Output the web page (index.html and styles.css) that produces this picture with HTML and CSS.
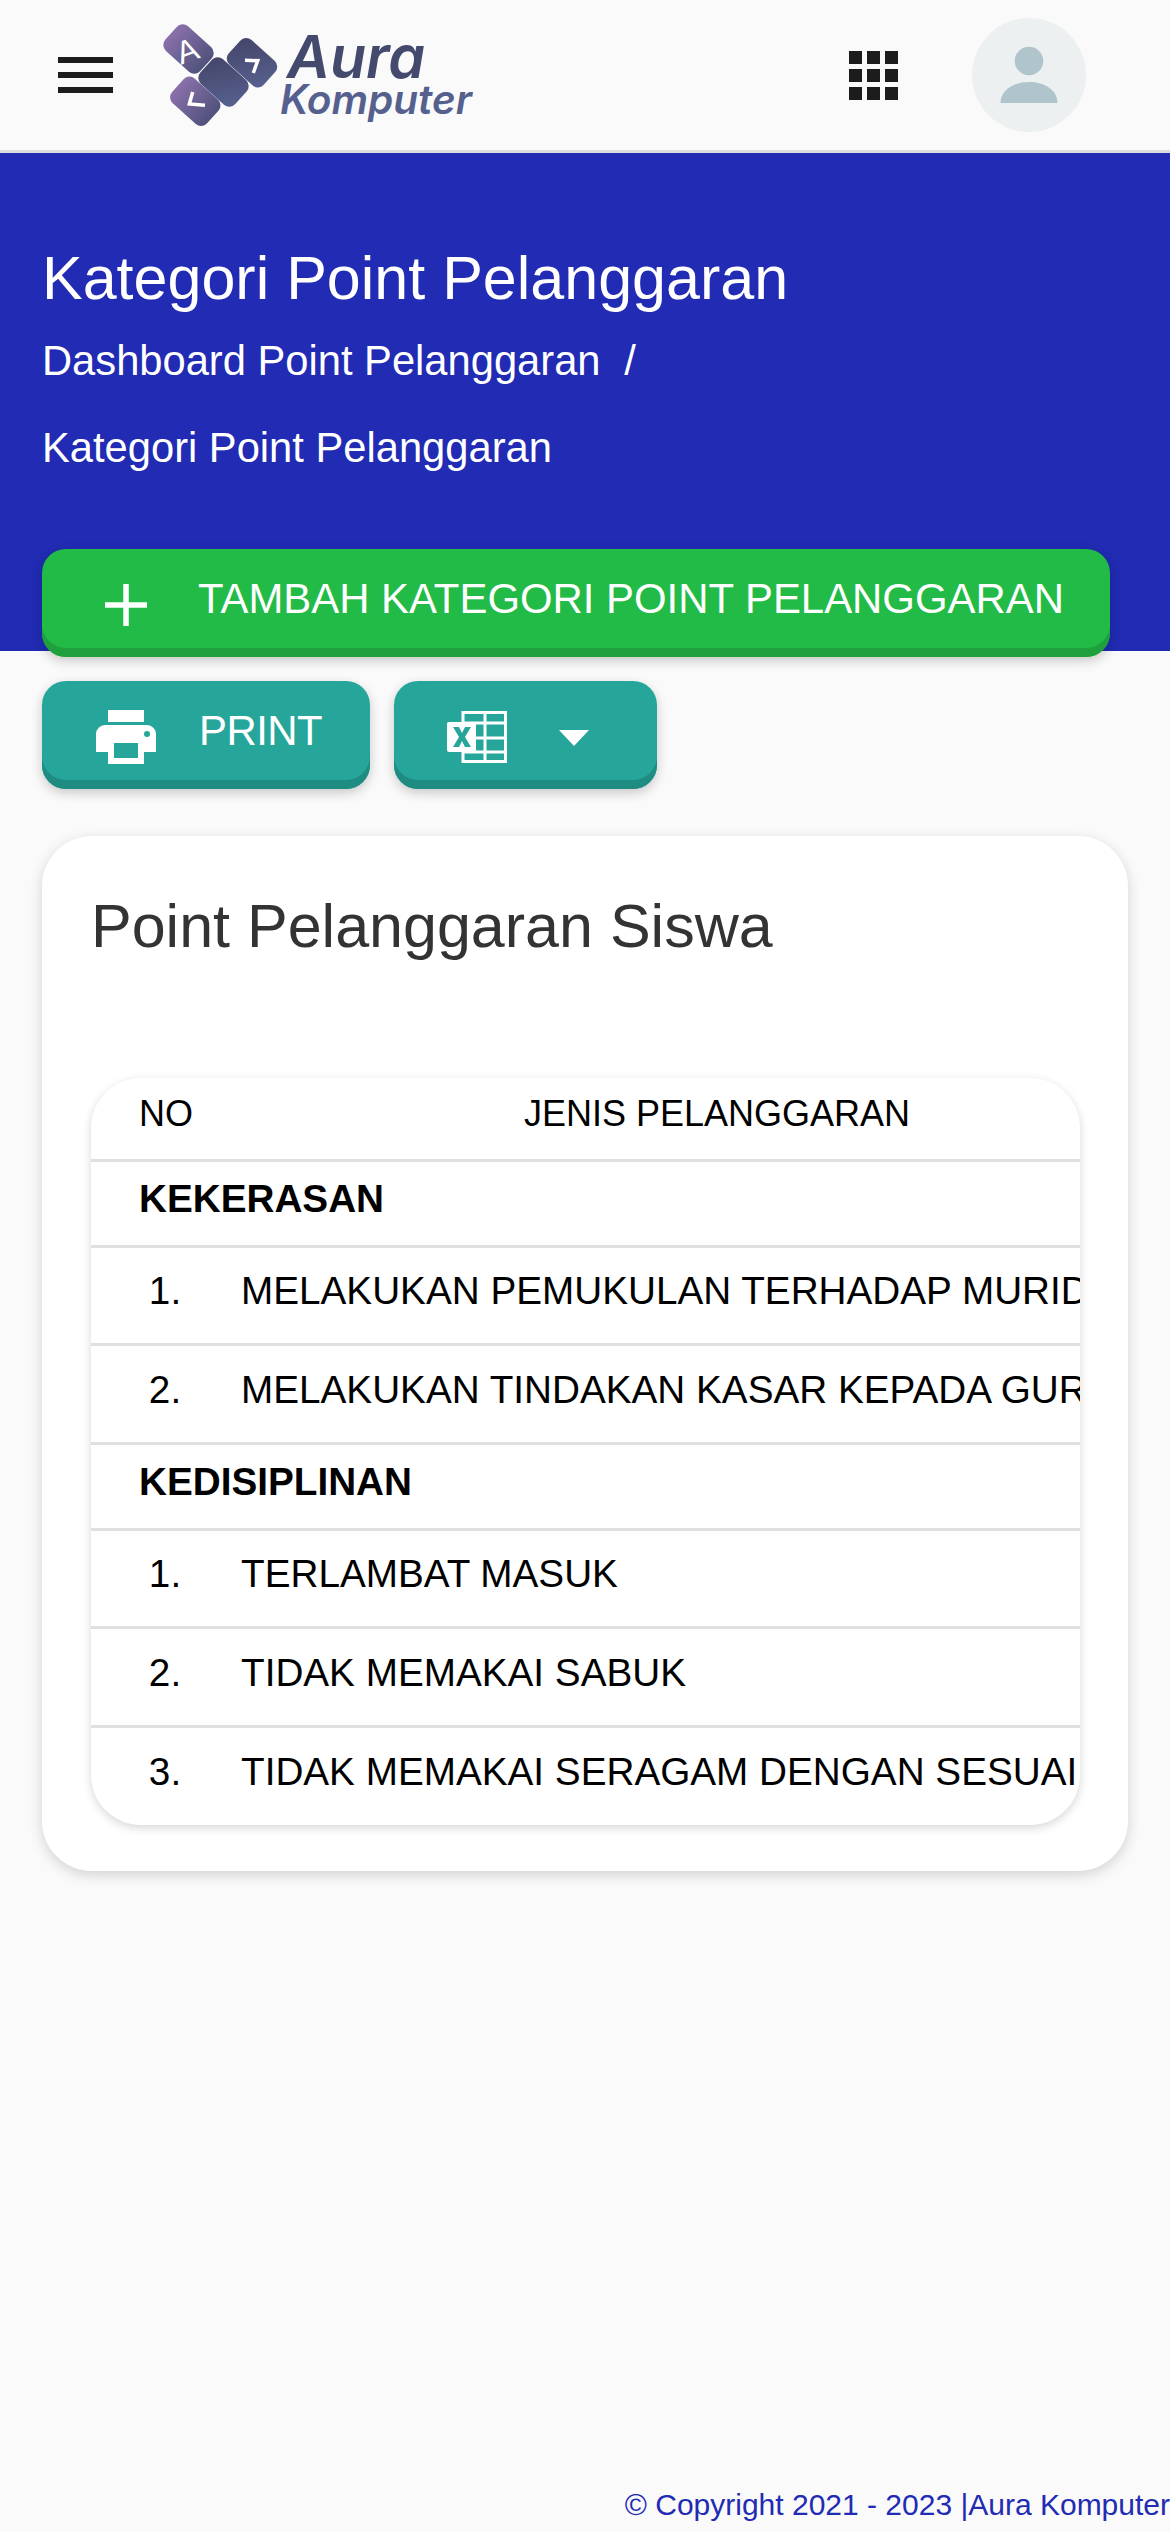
FILE: index.html
```html
<!DOCTYPE html>
<html lang="en">

<head>
    <meta charset="UTF-8">
    <meta name="viewport" content="width=device-width, initial-scale=1.0">
    <title>Kategori Point Pelanggaran</title>
    <link rel="stylesheet" href="styles.css">
</head>

<body>
    <header class="topbar">
        <div class="burger"><span></span><span></span><span></span></div>
        <div class="logo">
            <svg class="logoMark" width="130" height="115" viewBox="0 0 130 115">
                <defs>
                    <linearGradient id="tile" x1="0" y1="0.5" x2="1" y2="0.5">
                        <stop offset="0" stop-color="#50527c" />
                        <stop offset="1" stop-color="#8a70ab" />
                    </linearGradient>
                    <linearGradient id="tileDark" x1="0" y1="0.2" x2="1" y2="0.8">
                        <stop offset="0" stop-color="#45466a" />
                        <stop offset="1" stop-color="#56608e" />
                    </linearGradient>
                </defs>
                <rect x="-23.5" y="-16.5" width="47" height="33" rx="8" fill="url(#tile)" transform="translate(38.5 31) rotate(222)" />
                <rect x="-23.5" y="-16.5" width="47" height="33" rx="8" fill="url(#tileDark)" transform="translate(73.5 64) rotate(42)" />
                <rect x="-23.5" y="-16.5" width="47" height="33" rx="8" fill="url(#tileDark)" transform="translate(102 44.7) rotate(42)" />
                <rect x="-23.5" y="-16.5" width="47" height="33" rx="8" fill="url(#tile)" transform="translate(45.3 83.3) rotate(222)" />
                <text class="logoKey" transform="translate(41 43) rotate(-20)">A</text>
                <path d="M95 42.3L107.7 42.7L103.3 55" class="logoArrow" />
                <path d="M42.7 74L39.3 86L55 87.3" class="logoArrow" />
            </svg>
            <div class="logoText">
                <div class="logoAura">Aura</div>
                <div class="logoKomputer">Komputer</div>
            </div>
        </div>
        <div class="grid">
            <span></span><span></span><span></span>
            <span></span><span></span><span></span>
            <span></span><span></span><span></span>
        </div>
        <div class="avatar">
            <svg width="58" height="58" viewBox="0 0 58 58">
                <circle cx="29" cy="15" r="14.3" fill="#b0c4cc" />
                <path d="M0.5 57c0-13 13-21 28.5-21s28.5 8 28.5 21z" fill="#b0c4cc" />
            </svg>
        </div>
    </header>

    <section class="hero">
        <div class="heroTitle">Kategori Point Pelanggaran</div>
        <div class="crumb">Dashboard Point Pelanggaran <span class="crumbSep">/</span></div>
        <div class="crumb crumbLast">Kategori Point Pelanggaran</div>
    </section>

    <div class="actions">
        <button class="btn btnGreen btnWide">
            <svg class="btnIcon" width="42" height="42" viewBox="0 0 42 42">
                <path d="M21 0v42M0 21h42" stroke="#fff" stroke-width="5.5" fill="none" />
            </svg>
            <span>TAMBAH KATEGORI POINT PELANGGARAN</span>
        </button>
        <div class="btnRow">
            <button class="btn btnTeal btnPrint">
                <svg class="btnIcon" width="60" height="54" viewBox="0 0 60 54">
                    <path d="M12 0h36v12H12z" fill="#fff" />
                    <path d="M9 15h42a9 9 0 0 1 9 9v18H48v12H12V42H0V24a9 9 0 0 1 9-9z" fill="#fff" />
                    <path d="M18 33h24v15H18z" fill="#26a69a" />
                    <circle cx="51" cy="24" r="3" fill="#26a69a" />
                </svg>
                <span class="printText">PRINT</span>
            </button>
            <button class="btn btnTeal btnExcel">
                <svg class="btnIcon" width="60" height="52" viewBox="0 0 60 52">
                    <path d="M16 1.5h42.5v49H16z" fill="none" stroke="#fff" stroke-width="3" />
                    <path d="M16 12h43M16 27h43M16 41h43M38 1v50" stroke="#fff" stroke-width="3" fill="none" />
                    <rect x="0" y="11" width="29" height="30" rx="2" fill="#fff" />
                    <path d="M6 16h6l3 6 3-6h6l-6 10 6 10h-6l-3-6-3 6H6l6-10z" fill="#26a69a" />
                </svg>
                <span class="caret"></span>
            </button>
        </div>
    </div>

    <main class="card">
        <h2 class="cardTitle">Point Pelanggaran Siswa</h2>
        <div class="tableWrap">
            <table class="pointTable">
                <colgroup>
                    <col class="colNo">
                    <col class="colJenis">
                </colgroup>
                <tr class="headRow">
                    <th class="thNo">NO</th>
                    <th>JENIS PELANGGARAN</th>
                </tr>
                <tr class="catRow">
                    <td colspan="2">KEKERASAN</td>
                </tr>
                <tr>
                    <td class="num">1.</td>
                    <td>MELAKUKAN PEMUKULAN TERHADAP MURID</td>
                </tr>
                <tr>
                    <td class="num">2.</td>
                    <td>MELAKUKAN TINDAKAN KASAR KEPADA GURU</td>
                </tr>
                <tr class="catRow">
                    <td colspan="2">KEDISIPLINAN</td>
                </tr>
                <tr>
                    <td class="num">1.</td>
                    <td>TERLAMBAT MASUK</td>
                </tr>
                <tr>
                    <td class="num">2.</td>
                    <td>TIDAK MEMAKAI SABUK</td>
                </tr>
                <tr>
                    <td class="num">3.</td>
                    <td>TIDAK MEMAKAI SERAGAM DENGAN SESUAI</td>
                </tr>
            </table>
        </div>
    </main>

    <footer class="footer">© Copyright 2021 - 2023 |Aura Komputer</footer>
</body>

</html>
```

FILE: styles.css
```css
html,
body {
    margin: 0;
    padding: 0;
}

body {
    width: 1170px;
    height: 2532px;
    display: flex;
    flex-direction: column;
    overflow: hidden;
    background-color: #fafafa;
    font-family: "Liberation Sans", Arial, sans-serif;
}

/* top bar */
.topbar {
    display: flex;
    align-items: center;
    box-sizing: border-box;
    height: 153px;
    padding-left: 58px;
    border-bottom: 3px solid #dadcdf;
}

.burger {
    display: flex;
    flex-direction: column;
    gap: 9px;
    width: 55px;
}

.burger span {
    height: 6px;
    background-color: #1c1c1c;
}

.logo {
    display: flex;
    align-items: center;
    flex: none;
    width: 330px;
    margin-left: 37px;
}

.logoMark {
    flex: none;
}

.logoText {
    margin-left: 0;
    font-family: Inter, sans-serif;
    font-style: italic;
    font-weight: 600;
}

.logoAura {
    margin-left: 7px;
    font-size: 59px;
    line-height: 50px;
    color: #444a6e;
}

.logoKomputer {
    font-size: 40.5px;
    line-height: 36px;
    color: #55608f;
}

.logoKey {
    font-family: "Liberation Sans", sans-serif;
    font-size: 32px;
    text-anchor: middle;
    fill: #fff;
}

.logoArrow {
    fill: none;
    stroke: #fff;
    stroke-width: 3.5;
}

.grid {
    display: grid;
    flex: none;
    grid-template-columns: repeat(3, 13px);
    grid-auto-rows: 13px;
    gap: 5px;
    margin-left: 369px;
}

.grid span {
    background-color: #1c1c1c;
}

.avatar {
    display: flex;
    align-items: center;
    justify-content: center;
    flex: none;
    width: 114px;
    height: 114px;
    margin-left: 74px;
    border-radius: 50%;
    background-color: #ecf0f1;
}

/* blue header */
.hero {
    box-sizing: border-box;
    flex: none;
    height: 498px;
    padding: 90px 42px 0;
    background-color: #212bb3;
    color: #fff;
}

.heroTitle {
    font-size: 61px;
    line-height: 70px;
}

.crumb {
    margin-top: 22px;
    font-size: 41.7px;
    line-height: 52px;
}

.crumbSep {
    margin-left: 12px;
}

.crumbLast {
    margin-top: 35px;
}

/* buttons */
.actions {
    display: flex;
    flex-direction: column;
    flex: none;
    gap: 24px;
    margin-top: -102px;
    padding: 0 60px 0 42px;
}

.btnRow {
    display: flex;
    gap: 24px;
}

.btn {
    display: flex;
    align-items: center;
    box-sizing: border-box;
    height: 108px;
    margin: 0;
    padding: 0 0 9px;
    border: none;
    border-radius: 24px;
    font-family: "Liberation Sans", sans-serif;
    font-size: 41.9px;
    color: #fff;
}

.btnIcon {
    flex: none;
    margin-top: 13px;
}

.btnGreen {
    background-color: #23bb47;
    box-shadow: inset 0 -9px 0 #1fa03c, 0 4px 12px rgba(0, 0, 0, 0.2);
}

.btnTeal {
    background-color: #26a69a;
    box-shadow: inset 0 -9px 0 #1f8c82, 0 4px 12px rgba(0, 0, 0, 0.2);
}

.btnWide {
    width: 1068px;
    padding-left: 63px;
    gap: 51px;
}

.btnPrint {
    width: 328px;
    padding-left: 54px;
    gap: 43px;
}

.printText {
    letter-spacing: -0.5px;
}

.btnExcel {
    width: 263px;
    padding-left: 53px;
    gap: 52px;
}

.caret {
    width: 0;
    height: 0;
    margin-top: 14px;
    border-left: 15px solid transparent;
    border-right: 15px solid transparent;
    border-top: 16px solid #fff;
}

/* card */
.card {
    box-sizing: border-box;
    flex: none;
    width: 1086px;
    height: 1035px;
    margin: 47px 0 0 42px;
    padding: 54px 48px 0 49px;
    border-radius: 50px;
    background-color: #fff;
    box-shadow: 0 4px 14px rgba(0, 0, 0, 0.16);
}

.cardTitle {
    margin: 0 0 116px;
    font-size: 61px;
    font-weight: 400;
    line-height: 72px;
    color: #333;
}

.tableWrap {
    width: 989px;
    height: 747px;
    overflow: hidden;
    border-radius: 50px;
    background-color: #fff;
    box-shadow: 0 3px 10px rgba(0, 0, 0, 0.16);
}

.pointTable {
    width: 1102px;
    table-layout: fixed;
    border-collapse: collapse;
    font-size: 38.7px;
    color: #000;
}

.colNo {
    width: 150px;
}

.pointTable th {
    box-sizing: border-box;
    height: 82px;
    padding: 0 0 8px;
    font-size: 36px;
    font-weight: 400;
    text-align: center;
}

.pointTable th.thNo {
    padding-left: 48px;
    text-align: left;
}

.pointTable td {
    box-sizing: border-box;
    height: 98.5px;
    padding: 0 0 8px;
    border-top: 3px solid #e0e0e0;
    white-space: nowrap;
}

.pointTable .catRow td {
    height: 86px;
    padding-left: 48px;
    font-weight: 700;
}

.pointTable td.num {
    padding-right: 2px;
    text-align: center;
}

/* footer */
.footer {
    flex: none;
    margin-top: auto;
    padding-bottom: 8px;
    font-size: 30px;
    line-height: 38px;
    text-align: right;
    white-space: nowrap;
    color: #212bb3;
}
```
